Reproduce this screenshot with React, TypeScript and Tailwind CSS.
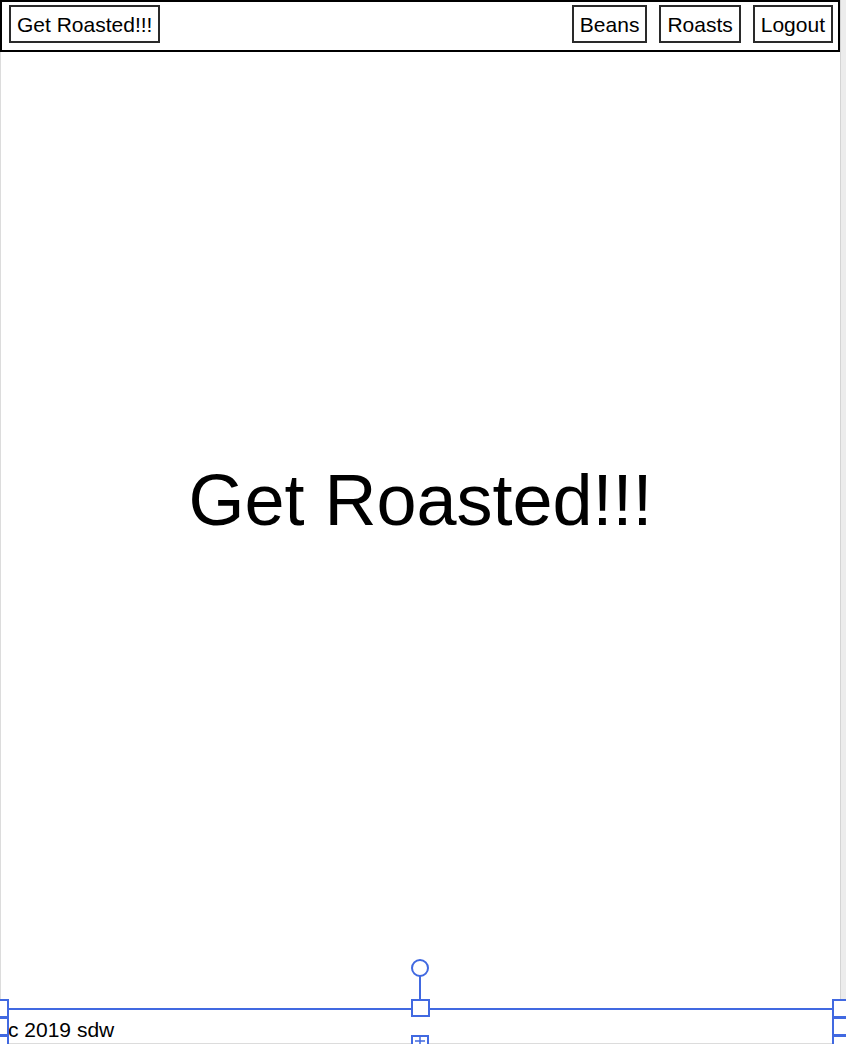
const navBox = "border-2 border-[#2a2a2a] px-[6px] h-[38px] flex items-center text-[21px] leading-none text-black";

function SelectionOverlay() {
  const blue = "#4169e1";
  return (
    <svg className="pointer-events-none absolute left-0 top-0" width={846} height={1044} viewBox="0 0 846 1044">
      <line x1={8} y1={1009} x2={833} y2={1009} stroke={blue} strokeWidth={2} />
      <line x1={420} y1={976} x2={420} y2={1000} stroke={blue} strokeWidth={2} />
      <circle cx={420} cy={968} r={8} fill="white" stroke={blue} strokeWidth={2} />
      <rect x={412} y={1000} width={17} height={16} fill="white" stroke={blue} strokeWidth={2} />
      <rect x={412} y={1036} width={16} height={16} fill="white" stroke={blue} strokeWidth={2} />
      <line x1={420} y1={1036} x2={420} y2={1044} stroke={blue} strokeWidth={1.5} />
      <line x1={415} y1={1041} x2={425} y2={1041} stroke={blue} strokeWidth={1.5} />
      <rect x={-9} y={1000} width={17} height={17} fill="white" stroke={blue} strokeWidth={2} />
      <rect x={-9} y={1018} width={17} height={17} fill="white" stroke={blue} strokeWidth={2} />
      <rect x={-9} y={1036} width={17} height={17} fill="white" stroke={blue} strokeWidth={2} />
      <rect x={833} y={1000} width={17} height={17} fill="white" stroke={blue} strokeWidth={2} />
      <rect x={833} y={1018} width={17} height={17} fill="white" stroke={blue} strokeWidth={2} />
      <rect x={833} y={1036} width={17} height={17} fill="white" stroke={blue} strokeWidth={2} />
    </svg>
  );
}

export default function App() {
  return (
    <div className="relative flex h-[1044px] w-[846px] overflow-hidden bg-white font-['Liberation_Sans',Arial,sans-serif] text-black">
      <div className="flex w-[840px] flex-col">
        <header className="flex h-[52px] items-start justify-between border-2 border-black pl-[7px] pr-[5px] pt-[3px]">
          <a className={navBox}>Get Roasted!!!</a>
          <nav className="flex gap-[12px]">
            <a className={navBox}>Beans</a>
            <a className={navBox}>Roasts</a>
            <a className={navBox}>Logout</a>
          </nav>
        </header>
        <main className="flex flex-1 flex-col items-center border-l border-[#dcdcdc] pt-[412px]">
          <h1 className="text-[72px] leading-none font-normal">Get Roasted!!!</h1>
        </main>
        <footer className="h-[35px] border-b border-[#dcdcdc] pl-[8px] pt-[10px] text-[21px] leading-none">
          c 2019 sdw
        </footer>
      </div>
      <div className="w-[6px] border-l border-[#d4d4d4] bg-[#ececec]" />
      <SelectionOverlay />
    </div>
  );
}
